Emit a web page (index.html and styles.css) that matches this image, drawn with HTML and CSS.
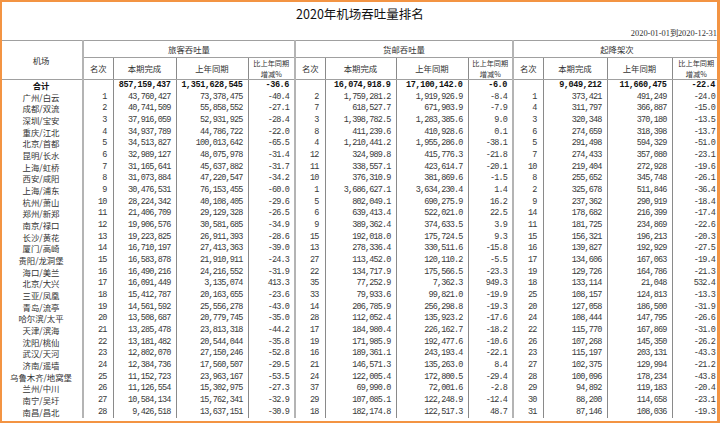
FILE: index.html
```html
<!DOCTYPE html>
<html lang="zh-CN">
<head>
<meta charset="utf-8">
<title>2020年机场吞吐量排名</title>
<link rel="stylesheet" href="styles.css">
</head>
<body>
<div class="page">
  <h1 class="title">2020年机场吞吐量排名</h1>
  <div class="date">2020-01-01到2020-12-31</div>
  <table class="rank">
    <colgroup>
      <col class="c-name">
      <col class="c-rk"><col class="c-p1"><col class="c-p2"><col class="c-p3">
      <col class="c-rk"><col class="c-c1"><col class="c-c2"><col class="c-c3">
      <col class="c-rk"><col class="c-f1"><col class="c-f2"><col class="c-f3">
    </colgroup>
    <thead>
      <tr class="grp">
        <th rowspan="2" class="airport gend">机场</th>
        <th colspan="4" class="gend">旅客吞吐量</th>
        <th colspan="4" class="gend">货邮吞吐量</th>
        <th colspan="4" class="last">起降架次</th>
      </tr>
      <tr class="sub">
        <th>名次</th><th>本期完成</th><th>上年同期</th><th class="gend two">比上年同期<br>增减%</th>
        <th>名次</th><th>本期完成</th><th>上年同期</th><th class="gend two">比上年同期<br>增减%</th>
        <th>名次</th><th>本期完成</th><th>上年同期</th><th class="last two">比上年同期<br>增减%</th>
      </tr>
    </thead>
    <tbody>
      <tr class="total"><td class="name gend">合计</td><td class="rk"></td><td>857,159,437</td><td>1,351,628,545</td><td class="gend">-36.6</td><td class="rk"></td><td>16,074,918.9</td><td>17,100,142.0</td><td class="gend">-6.0</td><td class="rk"></td><td>9,049,212</td><td>11,660,475</td><td class="last">-22.4</td></tr>
      <tr><td class="name gend">广州/白云</td><td class="rk">1</td><td>43,760,427</td><td>73,378,475</td><td class="gend">-40.4</td><td class="rk">2</td><td>1,759,281.2</td><td>1,919,926.9</td><td class="gend">-8.4</td><td class="rk">1</td><td>373,421</td><td>491,249</td><td class="last">-24.0</td></tr>
      <tr><td class="name gend">成都/双流</td><td class="rk">2</td><td>40,741,509</td><td>55,858,552</td><td class="gend">-27.1</td><td class="rk">7</td><td>618,527.7</td><td>671,903.9</td><td class="gend">-7.9</td><td class="rk">4</td><td>311,797</td><td>366,887</td><td class="last">-15.0</td></tr>
      <tr><td class="name gend">深圳/宝安</td><td class="rk">3</td><td>37,916,059</td><td>52,931,925</td><td class="gend">-28.4</td><td class="rk">3</td><td>1,398,782.5</td><td>1,283,385.6</td><td class="gend">9.0</td><td class="rk">3</td><td>320,348</td><td>370,180</td><td class="last">-13.5</td></tr>
      <tr><td class="name gend">重庆/江北</td><td class="rk">4</td><td>34,937,789</td><td>44,786,722</td><td class="gend">-22.0</td><td class="rk">8</td><td>411,239.6</td><td>410,928.6</td><td class="gend">0.1</td><td class="rk">6</td><td>274,659</td><td>318,398</td><td class="last">-13.7</td></tr>
      <tr><td class="name gend">北京/首都</td><td class="rk">5</td><td>34,513,827</td><td>100,013,642</td><td class="gend">-65.5</td><td class="rk">4</td><td>1,210,441.2</td><td>1,955,286.0</td><td class="gend">-38.1</td><td class="rk">5</td><td>291,498</td><td>594,329</td><td class="last">-51.0</td></tr>
      <tr><td class="name gend">昆明/长水</td><td class="rk">6</td><td>32,989,127</td><td>48,075,978</td><td class="gend">-31.4</td><td class="rk">12</td><td>324,989.8</td><td>415,776.3</td><td class="gend">-21.8</td><td class="rk">7</td><td>274,433</td><td>357,080</td><td class="last">-23.1</td></tr>
      <tr><td class="name gend">上海/虹桥</td><td class="rk">7</td><td>31,165,641</td><td>45,637,882</td><td class="gend">-31.7</td><td class="rk">11</td><td>338,557.1</td><td>423,614.7</td><td class="gend">-20.1</td><td class="rk">10</td><td>219,404</td><td>272,928</td><td class="last">-19.6</td></tr>
      <tr><td class="name gend">西安/咸阳</td><td class="rk">8</td><td>31,073,884</td><td>47,220,547</td><td class="gend">-34.2</td><td class="rk">10</td><td>376,310.9</td><td>381,869.6</td><td class="gend">-1.5</td><td class="rk">8</td><td>255,652</td><td>345,748</td><td class="last">-26.1</td></tr>
      <tr><td class="name gend">上海/浦东</td><td class="rk">9</td><td>30,476,531</td><td>76,153,455</td><td class="gend">-60.0</td><td class="rk">1</td><td>3,686,627.1</td><td>3,634,230.4</td><td class="gend">1.4</td><td class="rk">2</td><td>325,678</td><td>511,846</td><td class="last">-36.4</td></tr>
      <tr><td class="name gend">杭州/萧山</td><td class="rk">10</td><td>28,224,342</td><td>40,108,405</td><td class="gend">-29.6</td><td class="rk">5</td><td>802,049.1</td><td>690,275.9</td><td class="gend">16.2</td><td class="rk">9</td><td>237,362</td><td>290,919</td><td class="last">-18.4</td></tr>
      <tr><td class="name gend">郑州/新郑</td><td class="rk">11</td><td>21,406,709</td><td>29,129,328</td><td class="gend">-26.5</td><td class="rk">6</td><td>639,413.4</td><td>522,021.0</td><td class="gend">22.5</td><td class="rk">14</td><td>178,682</td><td>216,399</td><td class="last">-17.4</td></tr>
      <tr><td class="name gend">南京/禄口</td><td class="rk">12</td><td>19,906,576</td><td>30,581,685</td><td class="gend">-34.9</td><td class="rk">9</td><td>389,362.4</td><td>374,633.5</td><td class="gend">3.9</td><td class="rk">11</td><td>181,725</td><td>234,869</td><td class="last">-22.6</td></tr>
      <tr><td class="name gend">长沙/黄花</td><td class="rk">13</td><td>19,223,825</td><td>26,911,393</td><td class="gend">-28.6</td><td class="rk">15</td><td>192,018.0</td><td>175,724.5</td><td class="gend">9.3</td><td class="rk">15</td><td>156,321</td><td>196,213</td><td class="last">-20.3</td></tr>
      <tr><td class="name gend">厦门/高崎</td><td class="rk">14</td><td>16,710,197</td><td>27,413,363</td><td class="gend">-39.0</td><td class="rk">13</td><td>278,336.4</td><td>330,511.6</td><td class="gend">-15.8</td><td class="rk">16</td><td>139,827</td><td>192,929</td><td class="last">-27.5</td></tr>
      <tr><td class="name gend">贵阳/龙洞堡</td><td class="rk">15</td><td>16,583,878</td><td>21,910,911</td><td class="gend">-24.3</td><td class="rk">27</td><td>113,452.0</td><td>120,110.2</td><td class="gend">-5.5</td><td class="rk">17</td><td>134,606</td><td>167,063</td><td class="last">-19.4</td></tr>
      <tr><td class="name gend">海口/美兰</td><td class="rk">16</td><td>16,490,216</td><td>24,216,552</td><td class="gend">-31.9</td><td class="rk">22</td><td>134,717.9</td><td>175,566.5</td><td class="gend">-23.3</td><td class="rk">19</td><td>129,726</td><td>164,786</td><td class="last">-21.3</td></tr>
      <tr><td class="name gend">北京/大兴</td><td class="rk">17</td><td>16,091,449</td><td>3,135,074</td><td class="gend">413.3</td><td class="rk">35</td><td>77,252.9</td><td>7,362.3</td><td class="gend">949.3</td><td class="rk">18</td><td>133,114</td><td>21,048</td><td class="last">532.4</td></tr>
      <tr><td class="name gend">三亚/凤凰</td><td class="rk">18</td><td>15,412,787</td><td>20,163,655</td><td class="gend">-23.6</td><td class="rk">33</td><td>79,933.6</td><td>99,821.0</td><td class="gend">-19.9</td><td class="rk">25</td><td>108,157</td><td>124,813</td><td class="last">-13.3</td></tr>
      <tr><td class="name gend">青岛/流亭</td><td class="rk">19</td><td>14,561,592</td><td>25,556,278</td><td class="gend">-43.0</td><td class="rk">14</td><td>206,785.9</td><td>256,298.8</td><td class="gend">-19.3</td><td class="rk">20</td><td>127,058</td><td>186,500</td><td class="last">-31.9</td></tr>
      <tr><td class="name gend">哈尔滨/太平</td><td class="rk">20</td><td>13,508,687</td><td>20,779,745</td><td class="gend">-35.0</td><td class="rk">28</td><td>112,052.4</td><td>135,923.2</td><td class="gend">-17.6</td><td class="rk">24</td><td>108,444</td><td>147,795</td><td class="last">-26.6</td></tr>
      <tr><td class="name gend">天津/滨海</td><td class="rk">21</td><td>13,285,478</td><td>23,813,318</td><td class="gend">-44.2</td><td class="rk">17</td><td>184,980.4</td><td>226,162.7</td><td class="gend">-18.2</td><td class="rk">22</td><td>115,770</td><td>167,869</td><td class="last">-31.0</td></tr>
      <tr><td class="name gend">沈阳/桃仙</td><td class="rk">22</td><td>13,181,482</td><td>20,544,044</td><td class="gend">-35.8</td><td class="rk">19</td><td>171,985.9</td><td>192,477.6</td><td class="gend">-10.6</td><td class="rk">26</td><td>107,268</td><td>145,350</td><td class="last">-26.2</td></tr>
      <tr><td class="name gend">武汉/天河</td><td class="rk">23</td><td>12,802,070</td><td>27,150,246</td><td class="gend">-52.8</td><td class="rk">16</td><td>189,361.1</td><td>243,193.4</td><td class="gend">-22.1</td><td class="rk">23</td><td>115,197</td><td>203,131</td><td class="last">-43.3</td></tr>
      <tr><td class="name gend">济南/遥墙</td><td class="rk">24</td><td>12,384,736</td><td>17,560,507</td><td class="gend">-29.5</td><td class="rk">21</td><td>146,571.3</td><td>135,263.0</td><td class="gend">8.4</td><td class="rk">27</td><td>102,375</td><td>129,994</td><td class="last">-21.2</td></tr>
      <tr><td class="name gend">乌鲁木齐/地窝堡</td><td class="rk">25</td><td>11,152,723</td><td>23,963,167</td><td class="gend">-53.5</td><td class="rk">24</td><td>122,005.4</td><td>172,800.5</td><td class="gend">-29.4</td><td class="rk">28</td><td>100,096</td><td>178,234</td><td class="last">-43.8</td></tr>
      <tr><td class="name gend">兰州/中川</td><td class="rk">26</td><td>11,126,554</td><td>15,302,975</td><td class="gend">-27.3</td><td class="rk">37</td><td>69,990.0</td><td>72,001.6</td><td class="gend">-2.8</td><td class="rk">29</td><td>94,892</td><td>119,183</td><td class="last">-20.4</td></tr>
      <tr><td class="name gend">南宁/吴圩</td><td class="rk">27</td><td>10,584,134</td><td>15,762,341</td><td class="gend">-32.9</td><td class="rk">29</td><td>107,085.1</td><td>122,248.9</td><td class="gend">-12.4</td><td class="rk">30</td><td>88,200</td><td>114,658</td><td class="last">-23.1</td></tr>
      <tr><td class="name gend">南昌/昌北</td><td class="rk">28</td><td>9,426,518</td><td>13,637,151</td><td class="gend">-30.9</td><td class="rk">18</td><td>182,174.8</td><td>122,517.3</td><td class="gend">48.7</td><td class="rk">31</td><td>87,146</td><td>108,036</td><td class="last">-19.3</td></tr>
    </tbody>
  </table>
  <div class="frame"></div>
</div>
</body>
</html>
```

FILE: styles.css
```css
html, body {
  margin: 0;
  padding: 0;
  background: #ffffff;
}

.page {
  position: relative;
  width: 720px;
  height: 425px;
  overflow: hidden;
  font-family: "Noto Sans CJK SC", sans-serif;
  color: #333333;
}

.title {
  margin: 0;
  height: 27px;
  line-height: 28px;
  text-align: center;
  font-size: 12.5px;
  font-weight: normal;
  color: #111111;
}

.date {
  height: 13px;
  line-height: 13px;
  text-align: right;
  padding-right: 3px;
  font-family: "Liberation Serif", serif;
  font-size: 8.4px;
  color: #333333;
}

.rank {
  width: 720px;
  table-layout: fixed;
  border-collapse: collapse;
  border-top: 1px solid #a0a0a0;
}

.c-name { width: 83px; }
.c-rk { width: 30px; }
.c-p1 { width: 63px; }
.c-p2 { width: 72px; }
.c-p3 { width: 47px; }
.c-c1 { width: 71px; }
.c-c2 { width: 72px; }
.c-c3 { width: 45px; }
.c-f1 { width: 64px; }
.c-f2 { width: 65px; }
.c-f3 { width: 48px; }

.rank th {
  font-weight: normal;
  font-size: 8.4px;
  color: #333333;
  text-align: center;
  padding: 0;
  border-right: 1px solid #8a8a8a;
  border-bottom: 1px solid #a0a0a0;
}

.rank .grp th {
  height: 16px;
  line-height: 16px;
}

.rank .sub th {
  height: 21px;
  line-height: 10.5px;
}

.rank .sub th.two {
  line-height: 10.5px;
  font-size: 7.2px;
}

.rank th.airport {
  line-height: 12px;
}

.rank td {
  height: 11.67px;
  line-height: 11.67px;
  padding: 0 5px 0 0;
  text-align: right;
  white-space: nowrap;
  overflow: hidden;
  font-family: "Liberation Mono", monospace;
  font-size: 8.5px;
  letter-spacing: -0.85px;
  color: #3a3a3a;
  border-right: 1px solid #8a8a8a;
}

.rank td.rk {
  padding-right: 6px;
}

.rank td.name {
  padding: 0;
  text-align: center;
  font-family: "Noto Sans CJK SC", sans-serif;
  font-size: 8.4px;
  letter-spacing: 0;
  color: #333333;
}

.rank .gend {
  border-right: 2px solid #b4b4b4;
}

.rank .last {
  border-right: none;
}

.rank tr.total td {
  font-weight: bold;
  letter-spacing: -0.4px;
  color: #111111;
}

.rank tr.total td.name {
  letter-spacing: 0;
}

.frame {
  position: absolute;
  left: 0;
  top: 0;
  width: 720px;
  height: 423px;
  box-sizing: border-box;
  border: 2px solid #f39443;
  border-right-width: 3px;
  pointer-events: none;
}
```
